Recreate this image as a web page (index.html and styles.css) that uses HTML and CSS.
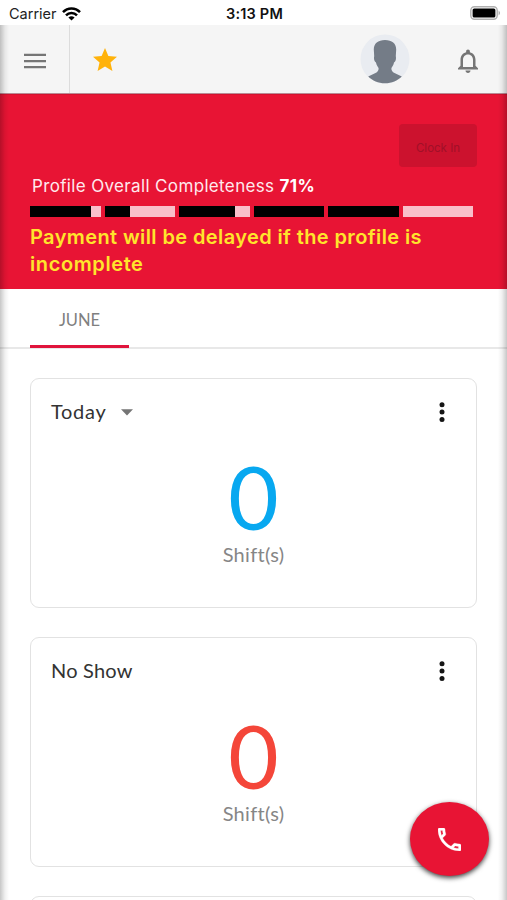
FILE: index.html
```html
<!DOCTYPE html>
<html lang="en">
<head>
    <meta charset="UTF-8">
    <meta name="viewport" content="width=device-width, initial-scale=1.0">
    <title>Dashboard</title>
    <link rel="stylesheet" href="styles.css">
</head>
<body>

    <div class="status-bar">
        <div class="carrier">
            <span>Carrier</span>
            <svg width="19" height="14" viewBox="0 0 19 14" fill="none" stroke="#000" stroke-width="2.5">
                <path d="M1 5.2 C5.7 .2 13.3 .2 18 5.2"/>
                <path d="M4 8.4 C7 5.2 12 5.2 15 8.4"/>
                <path d="M9.5 13.6 L6.4 10.6 Q9.5 7.8 12.6 10.6Z" fill="#000" stroke="none"/>
            </svg>
        </div>
        <span class="time">3:13 PM</span>
        <svg class="battery" width="31" height="14" viewBox="0 0 31 14">
            <rect x=".8" y=".8" width="26.4" height="12.4" rx="3.6" fill="#fff" stroke="#b0b0b0" stroke-width="1.4"/>
            <rect x="2.6" y="2.5" width="22.8" height="9" rx="1.6"/>
            <path d="M28.6 4.6 Q31.4 7 28.6 9.4Z" fill="#a8a8a8"/>
        </svg>
    </div>

    <div class="app">
        <div class="header">
            <div class="menu">
                <svg width="22" height="16" viewBox="0 0 22 16" fill="#757575">
                    <path d="M0 .8h22v2.3H0zM0 6.9h22v2.3H0zM0 13h22v2.3H0z"/>
                </svg>
            </div>
            <svg class="star" width="24" height="23" viewBox="2 2 20 19" preserveAspectRatio="none" fill="#ffb20a">
                <path d="M12 17.27 18.18 21l-1.64-7.03L22 9.24l-7.19-.61L12 2 9.19 8.63 2 9.24l5.46 4.73L5.82 21z"/>
            </svg>
            <svg class="avatar" width="50" height="50" viewBox="0 0 50 50">
                <circle cx="25" cy="25" r="24.5" fill="#e9ecf1"/>
                <path d="M25 6C18 6 13.800 9.500 13.800 15.500L14.200 22C13.600 24.500 14.300 27.800 16 28.600C16.500 31 17.400 32.500 18.600 34C18.800 36.500 17.500 38 15.500 39L8.200 42.500C12.500 46.800 18.200 49.300 25 49.300S37.500 46.800 41.800 42.500L34.500 39C32.500 38 31.200 36.500 31.400 34C32.600 32.500 33.500 31 34 28.600C35.700 27.800 36.400 24.500 35.800 22L36.200 15.500C36.200 9.500 32 6 25 6Z" fill="#747c87"/>
            </svg>
            <svg class="bell" width="20" height="24" viewBox="4 2 16 20" preserveAspectRatio="none" fill="#757575">
                <path d="M12 22c1.100 0 2-.9 2-2h-4c0 1.100.9 2 2 2zm6-6v-5c0-3.070-1.630-5.640-4.500-6.320V4c0-.83-.67-1.500-1.500-1.500s-1.500.67-1.500 1.500v.68C7.640 5.360 6 7.920 6 11v5l-2 2v1h16v-1l-2-2zm-2 1H8v-6c0-2.480 1.510-4.500 4-4.500s4 2.020 4 4.500v6z"/>
            </svg>
        </div>

        <div class="hero">
            <button class="clock-in" disabled>Clock In</button>
            <p class="completeness">Profile Overall Completeness <b>71%</b></p>
            <div class="progress">
                <div class="step"><div class="done" style="width: 87%"></div></div>
                <div class="step"><div class="done" style="width: 36%"></div></div>
                <div class="step"><div class="done" style="width: 80%"></div></div>
                <div class="step"><div class="done" style="width: 100%"></div></div>
                <div class="step"><div class="done" style="width: 100%"></div></div>
                <div class="step"><div class="done" style="width: 0%"></div></div>
            </div>
            <p class="warning">Payment will be delayed if the profile is<br><span class="last-word">incomplete</span></p>
        </div>

        <div class="tabs">
            <div class="tab">JUNE</div>
        </div>

        <div class="cards">
            <div class="card">
                <div class="card-head">
                    <span class="today">Today</span>
                    <svg class="caret" width="12" height="7" viewBox="0 0 12 7" fill="#757575"><path d="M0 .3h12L6 6.600z"/></svg>
                    <svg class="dots" width="6" height="20" viewBox="0 0 6 20" fill="#151515"><circle cx="3" cy="2.800" r="2.500"/><circle cx="3" cy="10.100" r="2.500"/><circle cx="3" cy="17.400" r="2.500"/></svg>
                </div>
                <div class="count blue">0</div>
                <div class="unit">Shift(s)</div>
            </div>

            <div class="card">
                <div class="card-head">
                    <span class="no-show">No Show</span>
                    <svg class="dots" width="6" height="20" viewBox="0 0 6 20" fill="#151515"><circle cx="3" cy="2.800" r="2.500"/><circle cx="3" cy="10.100" r="2.500"/><circle cx="3" cy="17.400" r="2.500"/></svg>
                </div>
                <div class="count red">0</div>
                <div class="unit">Shift(s)</div>
            </div>

            <div class="card"></div>
        </div>

        <div class="edge left"></div>
        <div class="edge right"></div>

        <div class="call">
            <svg width="23" height="23" viewBox="3 3 18 18" fill="#fff" stroke="#fff" stroke-width=".2">
                <path d="M6.540 5c.06.89.21 1.760.45 2.590l-1.200 1.200c-.41-1.200-.67-2.470-.76-3.790h1.510m9.860 12.020c.85.24 1.720.39 2.600.45v1.490c-1.320-.09-2.590-.35-3.800-.75l1.200-1.190M7.500 3H4c-.55 0-1 .45-1 1 0 9.390 7.610 17 17 17 .55 0 1-.45 1-1v-3.490c0-.55-.45-1-1-1-1.240 0-2.450-.2-3.570-.57-.1-.04-.21-.05-.31-.05-.26 0-.51.1-.71.29l-2.200 2.200c-2.830-1.450-5.150-3.760-6.590-6.590l2.200-2.200c.28-.28.36-.67.25-1.020C8.700 6.450 8.500 5.250 8.500 4c0-.55-.45-1-1-1z"/>
            </svg>
        </div>
    </div>

</body>
</html>
```

FILE: styles.css
```css
* {
    margin: 0;
    padding: 0;
    box-sizing: border-box;
}

body {
    width: 507px;
    height: 900px;
    overflow: hidden;
    font-family: Lato, sans-serif;
    background-color: #fff;
    color: #333;
}

svg {
    display: block;
    flex: none;
}

.status-bar {
    display: grid;
    grid-template-columns: 1fr auto 1fr;
    align-items: center;
    height: 25px;
    padding: 2px 7px 0 9px;
    font-family: Inter, sans-serif;
    font-size: 14.5px;
    color: #222;
}

.carrier {
    display: flex;
    align-items: center;
    gap: 5px;
}

.time {
    font-weight: 600;
    letter-spacing: .2px;
    color: #111;
}

.battery {
    justify-self: end;
    margin: -2px -1px 0 0;
}

.app {
    position: relative;
    height: 875px;
    overflow: hidden;
}

.header {
    display: flex;
    align-items: center;
    height: 69px;
    background-color: #f5f5f5;
    border-bottom: 1px solid #b98a94;
}

.menu {
    display: flex;
    align-items: center;
    justify-content: center;
    width: 70px;
    height: 100%;
    padding-top: 3px;
    border-right: 1px solid #dcdcdc;
}

.star {
    margin: 1px 0 0 23px;
}

.avatar {
    margin-left: auto;
}

.bell {
    margin: 3px 29px 0 48px;
}

.hero {
    display: flex;
    flex-direction: column;
    height: 195px;
    padding: 29px 30px 0;
    background-color: #e81434;
    border-top: 1px solid #d4122f;
    font-family: Inter, sans-serif;
}

.clock-in {
    align-self: flex-end;
    width: 78px;
    height: 43px;
    padding-top: 4px;
    border: none;
    border-radius: 4px;
    background-color: #cc122e;
    color: #a01028;
    font-family: Inter, sans-serif;
    font-size: 11.5px;
}

.completeness {
    margin: 8px 0 9px 2px;
    font-size: 17px;
    line-height: 22px;
    letter-spacing: .35px;
    color: #ffe9ed;
    white-space: nowrap;
}

.completeness b {
    color: #fff;
}

.progress {
    display: grid;
    grid-template-columns: repeat(6, 1fr);
    gap: 4px;
    margin-right: 4px;
}

.step {
    height: 11px;
    background-color: #f9bfca;
}

.done {
    height: 100%;
    background-color: #000;
}

.warning {
    margin-top: 7px;
    font-size: 20px;
    font-weight: 600;
    line-height: 27px;
    letter-spacing: .39px;
    color: #ffe52c;
    white-space: nowrap;
}

.last-word {
    letter-spacing: .6px;
}

.tabs {
    height: 60px;
    padding-left: 30px;
    border-bottom: 2px solid #e8e8e8;
}

.tab {
    width: 99px;
    height: 59px;
    border-bottom: 3px solid #e0143c;
    text-align: center;
    font-size: 16.5px;
    line-height: 62px;
    color: #808080;
}

.cards {
    display: flex;
    flex-direction: column;
    gap: 30px;
    padding: 29px 30px 0;
}

.card {
    flex: none;
    height: 230px;
    margin-bottom: -1px;
    border: 1px solid #e2e2e2;
    border-radius: 9px;
    text-align: center;
}

.card-head {
    display: flex;
    align-items: center;
    height: 65px;
    padding: 1px 31px 0 20px;
    font-size: 20px;
}

.today,
.no-show {
    margin-top: -2px;
}

.today {
    letter-spacing: .7px;
}

.no-show {
    letter-spacing: .2px;
}

.caret {
    margin-left: 15px;
}

.dots {
    margin-left: auto;
}

.count {
    height: 85px;
    margin-top: 10px;
    font-size: 87px;
    line-height: 85px;
}

.blue {
    color: #08a8f0;
}

.red {
    color: #f44639;
}

.unit {
    font-size: 20px;
    line-height: 30px;
    letter-spacing: .3px;
    color: #868686;
}

/* shadow running down both sides of the page */
.edge {
    position: absolute;
    top: 0;
    bottom: 0;
    width: 9px;
}

.left {
    left: 0;
    background: linear-gradient(to right, rgba(0, 0, 0, .22), rgba(0, 0, 0, .06) 55%, transparent);
}

.right {
    right: 0;
    background: linear-gradient(to left, rgba(0, 0, 0, .22), rgba(0, 0, 0, .06) 55%, transparent);
}

.call {
    position: absolute;
    right: 18px;
    bottom: 24px;
    display: flex;
    align-items: center;
    justify-content: center;
    width: 79px;
    height: 74px;
    border-radius: 50%;
    background-color: #e81434;
    box-shadow: 0 2px 5px rgba(0, 0, 0, .75);
}
```
